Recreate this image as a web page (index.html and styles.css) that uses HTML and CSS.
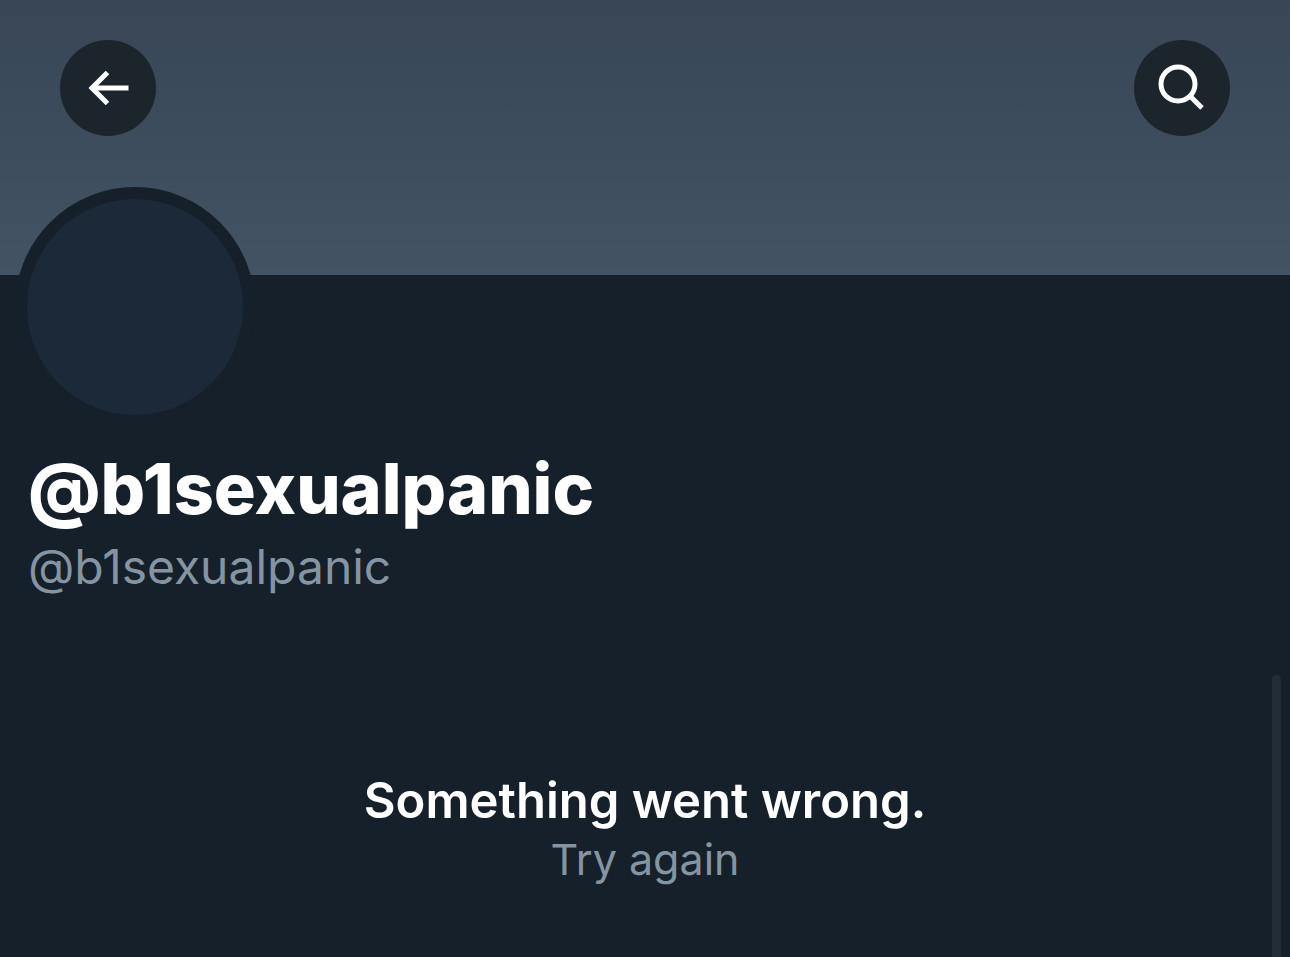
FILE: index.html
```html
<!DOCTYPE html>
<html lang="en">
<head>
    <meta charset="UTF-8">
    <meta name="viewport" content="width=device-width, initial-scale=1">
    <title>@b1sexualpanic</title>
    <link rel="stylesheet" href="styles.css">
</head>
<body>
    <header class="banner">
        <button class="icon-button" type="button" aria-label="Back">
            <svg viewBox="0 0 96 96" aria-hidden="true">
                <path d="M47.500 32.500 32 48l15.500 15.500M32 48h36.500"/>
            </svg>
        </button>
        <button class="icon-button" type="button" aria-label="Search">
            <svg viewBox="0 0 96 96" aria-hidden="true">
                <circle cx="44" cy="44" r="17"/>
                <path d="M56 56l12 12"/>
            </svg>
        </button>
    </header>
    <main class="profile">
        <div class="avatar"></div>
        <h1 class="name">@b1sexualpanic</h1>
        <p class="handle">@b1sexualpanic</p>
        <section class="error">
            <h2 class="error-title">Something went wrong.</h2>
            <button class="retry" type="button">Try again</button>
        </section>
    </main>
    <div class="scroll-thumb"></div>
</body>
</html>
```

FILE: styles.css
```css
body {
    margin: 0;
    min-height: 100vh;
    background: #15202a;
    color: #fff;
    font-family: Inter, sans-serif;
}
.banner {
    box-sizing: border-box;
    height: 275px;
    padding: 40px 60px;
    display: flex;
    justify-content: space-between;
    align-items: flex-start;
    background: linear-gradient(#384656, #435363);
}
.icon-button {
    width: 96px;
    height: 96px;
    padding: 0;
    border: 0;
    border-radius: 50%;
    background: #1c242c;
    cursor: pointer;
}
.icon-button svg {
    display: block;
    fill: none;
    stroke: #fff;
    stroke-width: 5;
}
.profile {
    padding: 0 28px;
}
.avatar {
    width: 216px;
    height: 216px;
    margin: -88px 0 0 -13px;
    border: 12px solid #15202a;
    border-radius: 50%;
    background: #1c2938;
}
.name {
    margin: 18px 0 0;
    font-size: 70px;
    font-weight: 800;
    line-height: 88px;
}
.handle {
    margin: 4px 0 0;
    color: #8594a1;
    font-size: 48px;
    line-height: 60px;
}
.error {
    margin-top: 174px;
    text-align: center;
}
.error-title {
    margin: 0;
    font-size: 49px;
    font-weight: 600;
    line-height: 60px;
}
.retry {
    padding: 0;
    border: 0;
    background: none;
    color: #8594a1;
    font: inherit;
    font-size: 43px;
    line-height: 56px;
    cursor: pointer;
}
.scroll-thumb {
    position: absolute;
    top: 675px;
    right: 9px;
    bottom: 0;
    width: 9px;
    border-radius: 5px 5px 0 0;
    background: #242d36;
}
```
